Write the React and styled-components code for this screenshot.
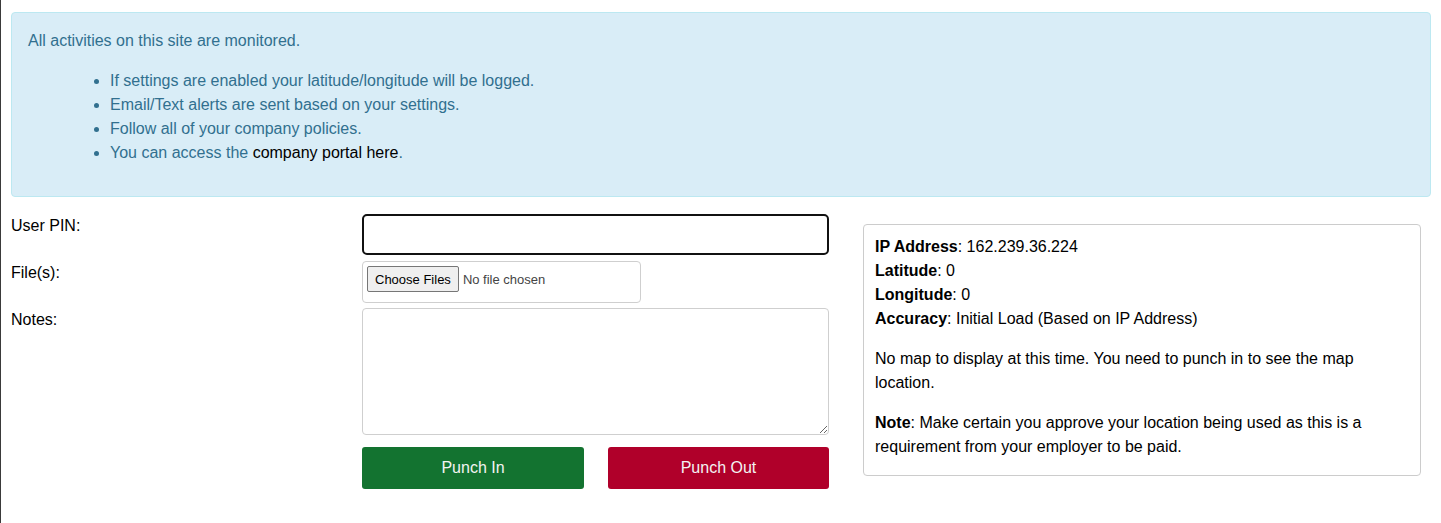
import React from "react"
import styled, { createGlobalStyle } from "styled-components"

const GlobalStyle = createGlobalStyle`
  html, body {
    margin: 0;
    padding: 0;
    background: #ffffff;
  }
  body {
    font-family: "Liberation Sans", Arial, sans-serif;
    font-size: 16px;
    line-height: 24px;
    color: #000;
  }
  * {
    box-sizing: border-box;
  }
`

const App = () => {
  return (
    <>
      <GlobalStyle />
      <Page>
        <Alert>
          <AlertLead>All activities on this site are monitored.</AlertLead>
          <AlertList>
            <li>If settings are enabled your latitude/longitude will be logged.</li>
            <li>Email/Text alerts are sent based on your settings.</li>
            <li>Follow all of your company policies.</li>
            <li>
              You can access the <PortalLink href="#">company portal here</PortalLink>.
            </li>
          </AlertList>
        </Alert>

        <Row>
          <FormColumn>
            <FieldRow>
              <Label>User PIN:</Label>
              <PinInput type="password" />
            </FieldRow>
            <FieldRow gap={6}>
              <Label>File(s):</Label>
              <FileBox>
                <input type="file" multiple />
              </FileBox>
            </FieldRow>
            <FieldRow gap={5}>
              <Label>Notes:</Label>
              <Notes />
            </FieldRow>
            <ButtonRow>
              <Spacer />
              <Buttons>
                <PunchButton variant="in">Punch In</PunchButton>
                <PunchButton variant="out">Punch Out</PunchButton>
              </Buttons>
            </ButtonRow>
          </FormColumn>

          <InfoPanel>
            <InfoList>
              <div><b>IP Address</b>: 162.239.36.224</div>
              <div><b>Latitude</b>: 0</div>
              <div><b>Longitude</b>: 0</div>
              <div><b>Accuracy</b>: Initial Load (Based on IP Address)</div>
            </InfoList>
            <InfoText>
              No map to display at this time. You need to punch in to see the map location.
            </InfoText>
            <InfoText>
              <b>Note</b>: Make certain you approve your location being used as this is a
              requirement from your employer to be paid.
            </InfoText>
          </InfoPanel>
        </Row>
      </Page>
    </>
  )
}

export default App

export const Page = styled.div`
  min-height: 100vh;
  border-left: 1px solid #3a3a3a;
  padding: 12px 10px 0 10px;
`

export const Alert = styled.div`
  background-color: #d9edf7;
  border: 1px solid #bce8f1;
  border-radius: 4px;
  color: #31708f;
  padding: 16px 16px 15px;
`

export const AlertLead = styled.p`
  margin: 0 0 16px;
`

export const AlertList = styled.ul`
  margin: 0 0 16px;
  padding-left: 82px;
`

export const PortalLink = styled.a`
  color: #000;
  text-decoration: none;
`

export const Row = styled.div`
  display: flex;
  align-items: flex-start;
  margin-top: 17px;
`

export const FormColumn = styled.div`
  width: 818px;
  display: flex;
  flex-direction: column;
`

export const FieldRow = styled.div`
  display: flex;
  align-items: flex-start;
  margin-top: ${(p) => p.gap || 0}px;
`

export const Label = styled.label`
  width: 351px;
  flex: none;
`

export const PinInput = styled.input`
  width: 467px;
  height: 41px;
  border: 2px solid #111;
  border-radius: 5px;
  padding: 6px 12px;
  font-size: 16px;
  outline: none;
`

export const FileBox = styled.div`
  width: 279px;
  height: 42px;
  border: 1px solid #cfcfcf;
  border-radius: 4px;
  padding: 4px;
  input {
    display: block;
    height: 26px;
    font-family: Arial, "Liberation Sans", sans-serif;
    font-size: 13px;
    line-height: 26px;
    color: #444;
    width: 100%;
  }
  input::file-selector-button {
    font-family: Arial, "Liberation Sans", sans-serif;
    font-size: 13px;
    color: #000;
    background: #efefef;
    border: 1px solid #767676;
    border-radius: 2px;
    padding: 0 7px;
    margin: 0 4px 0 0;
    height: 26px;
  }
`

export const Notes = styled.textarea`
  width: 467px;
  height: 127px;
  border: 1px solid #cfcfcf;
  border-radius: 4px;
  padding: 6px 12px;
  font-family: "Liberation Sans", Arial, sans-serif;
  font-size: 16px;
  display: block;
`

export const ButtonRow = styled.div`
  display: flex;
  margin-top: 12px;
`

export const Spacer = styled.div`
  width: 351px;
  flex: none;
`

export const Buttons = styled.div`
  width: 467px;
  display: flex;
  justify-content: space-between;
`

export const PunchButton = styled.button`
  width: ${(p) => (p.variant === "in" ? 222 : 221)}px;
  height: 42px;
  border: none;
  border-radius: 3px;
  font-family: "Liberation Sans", Arial, sans-serif;
  font-size: 16px;
  color: #f3f3f3;
  background-color: ${(p) => (p.variant === "in" ? "#137330" : "#b0002a")};
  cursor: pointer;
`

export const InfoPanel = styled.div`
  margin-left: 34px;
  margin-top: 10px;
  width: 558px;
  border: 1px solid #cccccc;
  border-radius: 4px;
  padding: 10px 11px 16px;
`

export const InfoList = styled.div`
  margin-bottom: 16px;
`

export const InfoText = styled.p`
  margin: 0 0 16px;
  &:last-child {
    margin-bottom: 0;
  }
`
